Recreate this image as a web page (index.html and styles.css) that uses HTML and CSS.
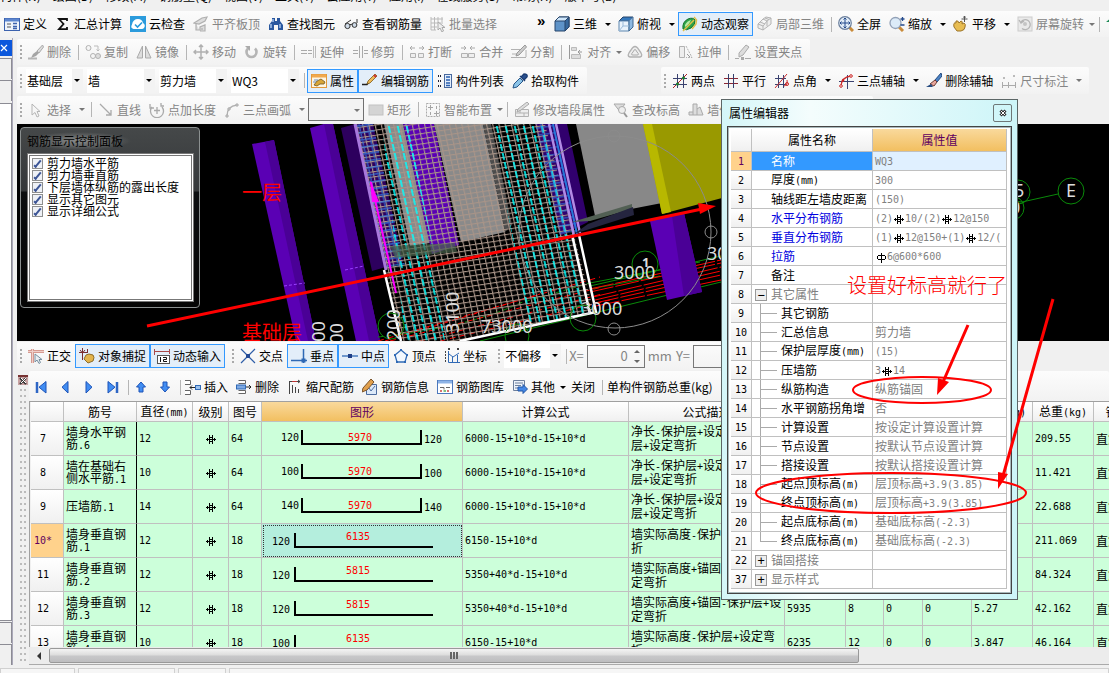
FILE: index.html
```html
<!DOCTYPE html>
<html lang="zh-CN">
<head>
<meta charset="utf-8">
<title>钢筋算量</title>
<link rel="stylesheet" href="styles.css">
</head>
<body>
<svg class="defs" aria-hidden="true">
  <symbol id="bar3" viewBox="0 0 12 12"><path d="M1 6.500H11M4.500 2V11M7.500 2V11" fill="none" stroke="currentColor"/><path d="M4 4.500H8M4 8.500H8M2.500 5V8M9.500 5V8" fill="none" stroke="currentColor"/></symbol>
  <symbol id="bar1" viewBox="0 0 12 12"><path d="M6.500 2V12M3 4.500H10M3 8.500H10M2.500 5V8M10.500 5V8" fill="none" stroke="currentColor"/></symbol>
  <symbol id="define" viewBox="0 0 16 16"><rect x=".5" y="2.500" width="15" height="12" fill="#eef3fb" stroke="#3c62ae"/><path d="M1 4H15" stroke="#5d86cf" stroke-width="3"/><path d="M3 8H7M3 11H7" stroke="#555"/><path d="M9 7.500H13M9 10.500H13M9 12.500H13" stroke="#3c62ae" stroke-width="1.500"/></symbol>
  <symbol id="sigma" viewBox="0 0 16 16"><path d="M12 5V3H4L8.500 8L4 13.200H12V11" fill="none" stroke="#111" stroke-width="1.800"/></symbol>
  <symbol id="cloud" viewBox="0 0 16 16"><rect width="16" height="16" fill="#2b9bdc"/><path d="M3.500 13Q0 12 2 8.500Q3 3 8 3Q12 3 13 7Q16 9 14 12Q13 13 12 13Z" fill="#fff"/><path d="M5 8.500L7.500 11L12 6.500" fill="none" stroke="#2b9bdc" stroke-width="1.600"/></symbol>
  <symbol id="flat" viewBox="0 0 16 16"><path d="M1 7L9 2L14 1L12 5L6 8ZM3 8V14H7V11L12 9V15H7M9 12V14" fill="#ddd" stroke="#b0b0b0" stroke-width="1.200"/></symbol>
  <symbol id="find" viewBox="0 0 16 16"><path d="M4 2H7V5H9V2H12V5L15 9V14H10V9H6V14H1V9L4 5Z" fill="#29579f"/><path d="M3 8V12M12 8V12M5 3V6" stroke="#b9d3f5" stroke-width="1.300"/></symbol>
  <symbol id="glasses" viewBox="0 0 16 16"><circle cx="4.500" cy="10" r="2.600" fill="#cfdbe8" stroke="#333"/><circle cx="11.500" cy="9" r="2.400" fill="#cfdbe8" stroke="#333"/><path d="M7 9Q8 7.500 9 8.500M2 8L8 4M14 7V3" fill="none" stroke="#333"/></symbol>
  <symbol id="batch" viewBox="0 0 16 16"><path d="M1 1V14M4.500 1V14M1 3H13M1 7H13M1 11H7M8 1V6M12 1V6M1 14H6" stroke="#bbb" fill="none"/><path d="M8 6V14L10 12L12 16L13.500 15L12 11.500H15Z" fill="#eee" stroke="#aaa"/></symbol>
  <symbol id="cube" viewBox="0 0 16 16"><path d="M1 5L5 1H15V11L11 15H1Z" fill="#5e93c8" stroke="#27456b"/><path d="M1 5L5 1H15L11 5Z" fill="#cfe6fa" stroke="#27456b"/><path d="M11 5V15L15 11V1Z" fill="#37689c" stroke="#27456b"/></symbol>
  <symbol id="topview" viewBox="0 0 16 16"><path d="M1 5L5 1H15L11 5Z" fill="#3579bd" stroke="#27456b"/><path d="M1 5H11V15H1Z" fill="#eaf3fb" stroke="#5d86af"/><path d="M11 5V15L15 11V1" fill="#8db8e0" stroke="#3d6690"/><path d="M5 6V10H11M5 10L1 15" stroke="#9bbbd9" fill="none"/></symbol>
  <symbol id="orbit" viewBox="0 0 16 16"><path d="M1 13Q0 6 6 3Q11 1 13 4Q14 8 9 12Q4 15 1 13Z" fill="#2da34a" stroke="#14732c"/><path d="M3 9Q5 5 9 4Q7 9 3 11Z" fill="#b8eaa5"/><path d="M12 1L14.500 4L14 8L10 13M1 15L12 4" fill="none" stroke="#dfc04a" stroke-width="1.500"/></symbol>
  <symbol id="part3d" viewBox="0 0 16 16"><path d="M1 8L6 3L10 5L6 10ZM6 10V14L1 12V8M6 14L14 8V2L9 1L6 3M10 5V10M14 2L10 5M3 6L8 8M8 2L12 3.500" fill="#eee" stroke="#b4b4b4"/></symbol>
  <symbol id="full" viewBox="0 0 16 16"><path d="M11 11L15 15" stroke="#c98b3a" stroke-width="3"/><circle cx="7" cy="7" r="6.300" fill="#e2edf8" stroke="#6b7f9c" stroke-width="1.200"/><path d="M7 2V12M2 7H12M5.500 3.500L7 2L8.500 3.500M5.500 10.500L7 12L8.500 10.500M3.500 5.500L2 7L3.500 8.500M10.500 5.500L12 7L10.500 8.500" stroke="#244a8c" fill="none"/></symbol>
  <symbol id="zoomi" viewBox="0 0 16 16"><path d="M10 11L14 15" stroke="#c98b3a" stroke-width="3"/><circle cx="6.500" cy="7" r="5.500" fill="#dcebf8" stroke="#92a1b7" stroke-width="1.300"/><path d="M13.500 1V5M11.500 3H15.500M11.500 9H15.500" stroke="#244a8c" stroke-width="1.300"/></symbol>
  <symbol id="hand" viewBox="0 0 16 16"><path d="M1 11Q0 6 3 7V5Q5 4 6 7L8 5Q10 5 9 8L11 7Q13 8 12 11Q12 14 8 15H4Z" fill="#e8bd52" stroke="#9c742a"/><path d="M11.500 0V6M8.500 3H14.500M10.500 1.500L11.500 0L12.500 1.500" stroke="#555" fill="none"/></symbol>
  <symbol id="screenrot" viewBox="0 0 16 16"><rect x="1" y="1" width="14" height="14" fill="#e9e9e9" stroke="#ccc"/><path d="M4 6A5 5 0 1 1 5 12.500M2 4L4 7L7 5" fill="none" stroke="#b5b5b5" stroke-width="1.300"/><circle cx="8" cy="8" r="2" fill="#c4c4c4"/></symbol>
  <symbol id="green" viewBox="0 0 16 16"><path d="M0 6L6 1L12 6H9V15H3V6Z" fill="#1d8a55"/></symbol>
  <symbol id="brush" viewBox="0 0 16 16"><path d="M14.500 1L9 7L11 9L15.500 3Z" fill="#ddd" stroke="#aaa"/><path d="M9 7L5 10L3 14L8 12L11 9Z" fill="#a5a5a5"/><path d="M0 14.500H9" stroke="#b5b5b5" stroke-width="2"/></symbol>
  <symbol id="copy" viewBox="0 0 16 16"><circle cx="3.500" cy="4" r="2.500" fill="#f5f5f5" stroke="#b2b2b2"/><circle cx="8" cy="12" r="2.500" fill="#f5f5f5" stroke="#b2b2b2"/><circle cx="13" cy="12" r="2.500" fill="#ddd" stroke="#b2b2b2"/><path d="M9 2H13V7M11.500 5.500L13 7L14.500 5.500" fill="none" stroke="#bbb"/></symbol>
  <symbol id="mirror" viewBox="0 0 16 16"><path d="M6.500 2V14H1ZM9.500 2V14H15Z" fill="#ddd" stroke="#aaa"/></symbol>
  <symbol id="move" viewBox="0 0 16 16"><path d="M8 1V15M1 8H15M6 3L8 1L10 3M6 13L8 15L10 13M3 6L1 8L3 10M13 6L15 8L13 10" stroke="#b0b0b0" stroke-width="1.500" fill="none"/></symbol>
  <symbol id="rotate" viewBox="0 0 16 16"><path d="M4 4.500A5 5 0 1 0 11 4.500" fill="none" stroke="#b5b5b5" stroke-width="2.600"/><path d="M1 2H6V7Z" fill="#aaa"/></symbol>
  <symbol id="extend" viewBox="0 0 16 16"><path d="M0 6.500H6M0 9.500H6M7 6.500H11M7 9.500H11" stroke="#aaa"/><path d="M12.500 2V14M14.500 2V14" stroke="#bbb"/></symbol>
  <symbol id="trim" viewBox="0 0 16 16"><path d="M1 6.500H6M1 9.500H6M12 6.500H16M12 9.500H16M7.500 2V14M10.500 2V14" stroke="#aaa"/></symbol>
  <symbol id="break" viewBox="0 0 16 16"><path d="M1 4H6M3 2L1 4L3 6M10 4H15M13 2L15 4L13 6" fill="none" stroke="#aaa"/><path d="M1.500 9.500H6.500V13.500H1.500ZM14.500 9.500H9.500V13.500H14.500Z" fill="#eee" stroke="#b2b2b2"/></symbol>
  <symbol id="merge" viewBox="0 0 16 16"><path d="M1 4H6M4 2L6 4L4 6M10 4H15M12 2L10 4L12 6" fill="none" stroke="#aaa"/><path d="M1.500 9.500H7.500V13.500H1.500ZM14.500 9.500H8.500V13.500H14.500Z" fill="#eee" stroke="#b2b2b2"/></symbol>
  <symbol id="split" viewBox="0 0 16 16"><path d="M0 5.500H9M0 13.500H15M15 6V13M1 10H9" stroke="#b2b2b2"/><path d="M14 1L6 9L5 12L8 11L15.500 3Z" fill="#ccc" stroke="#999"/></symbol>
  <symbol id="align" viewBox="0 0 16 16"><path d="M1.500 1V15" stroke="#999"/><path d="M3.500 3.500H8.500V6.500H3.500ZM3.500 10.500H12.500V14.500H3.500Z" fill="#ddd" stroke="#bbb"/><path d="M14 8H10M12 6L10 8L12 10" stroke="#999" fill="none"/></symbol>
  <symbol id="offset" viewBox="0 0 16 16"><path d="M4 6Q8-1 12 6Q17 12 13 13H3Q-1 12 4 6Z" fill="#eee" stroke="#b2b2b2" stroke-width="1.300"/><path d="M6 8Q8 3 10 8Q13 11 10 11H6Q3 11 6 8Z" fill="none" stroke="#aaa"/></symbol>
  <symbol id="stretch" viewBox="0 0 16 16"><path d="M1.500 2.500H6.500V13.500H1.500Z" fill="#eee" stroke="#b2b2b2"/><path d="M8 2L14 13.500H8" fill="none" stroke="#b2b2b2" stroke-dasharray="2 1"/><path d="M9 10L12 13" stroke="#999"/></symbol>
  <symbol id="gripset" viewBox="0 0 16 16"><path d="M4 9L11 1L14 3L8 11L4 13Z" fill="#ddd" stroke="#aaa"/><path d="M0 14.500H4M10 14.500H16" stroke="#aaa"/><rect x="6" y="13" width="3" height="3" fill="#aaa"/></symbol>
  <symbol id="prop" viewBox="0 0 16 16"><rect x=".5" y="1.500" width="15" height="13" fill="#fff6e2" stroke="#e39a3c"/><path d="M1 3H15" stroke="#f0a94e" stroke-width="3"/><path d="M3 12L6 8L10 6L14 9L13 11L9 11L6 13Z" fill="#d8a63a" stroke="#6f5522" stroke-width=".8"/><path d="M3 7H7M2 9H5" stroke="#668bc0"/></symbol>
  <symbol id="editbar" viewBox="0 0 16 16"><path d="M0 11.500H5L7 9" stroke="#222" stroke-width="1.500" fill="none"/><path d="M13 1L6 8L5 11L8 10L15 3Z" fill="#efb955" stroke="#7c5b1b" stroke-width=".8"/><path d="M12 2L14 4" stroke="#c33" stroke-width="2"/></symbol>
  <symbol id="list" viewBox="0 0 16 16"><path d="M1 3H5M1 8H5M1 13H5" stroke="#223" stroke-dasharray="1 1" stroke-width="2"/><rect x="7.500" y="1.500" width="7" height="13" fill="#e3eefb" stroke="#49699e"/><path d="M9 4H13M9 7H13M9 10H13M9 12.500H13" stroke="#2b5fb0" stroke-width="1.400"/></symbol>
  <symbol id="pick" viewBox="0 0 16 16"><path d="M1 15L2 11L8 5L11 8L5 14Z" fill="#8cc4e8" stroke="#28578a"/><path d="M8 3L13 8M9 4L12 1Q16 1 15 4L12 7Z" fill="#29508f" stroke="#1d3d73" stroke-width="1.300"/></symbol>
  <symbol id="twopt" viewBox="0 0 16 16"><path d="M1 5.500H15M1 11.500H15M5.500 1V15M11.500 1V15" stroke="#3a4270"/><path d="M1 15L15 1" stroke="#b02020"/><circle cx="5.500" cy="11" r="1.600" fill="#1e7b2d"/><circle cx="11.500" cy="5" r="1.600" fill="#1e7b2d"/></symbol>
  <symbol id="parallel" viewBox="0 0 16 16"><path d="M1 5.500H15M1 10.500H15" stroke="#8a2635"/><path d="M5.500 1V15M10.500 1V15" stroke="#33406e"/></symbol>
  <symbol id="angle" viewBox="0 0 16 16"><path d="M1 5.500H12M1 11.500H12M4.500 2V15M9.500 2V15" stroke="#3a4270"/><path d="M1 15L13 1M10 13Q14 12 13 7" stroke="#cc2b2b" fill="none"/><circle cx="13" cy="11" r="1.500" fill="none" stroke="#c22"/></symbol>
  <symbol id="arcax" viewBox="0 0 16 16"><path d="M1 8.500H16M9.500 2V16" stroke="#3a4270"/><path d="M3 14Q3 4 13 3" stroke="#cc2b2b" fill="none" stroke-width="1.300"/><circle cx="3" cy="13" r="1.300" fill="#fff" stroke="#c22"/><circle cx="13" cy="3" r="1.300" fill="#fff" stroke="#c22"/><circle cx="5" cy="7.500" r="1.300" fill="#c22"/></symbol>
  <symbol id="delax" viewBox="0 0 16 16"><path d="M15 0L9 7L11 9L16 3Z" fill="#4a83c5" stroke="#254b80"/><path d="M9 7L11 9L8 13L4 11Z" fill="#e9a79c" stroke="#6d3b36"/><path d="M0 14H7L5 11Z" fill="#254b80"/></symbol>
  <symbol id="dim" viewBox="0 0 16 16"><path d="M1.500 9V15M14.500 9V15M7.500 9V15M2 12.500H14" stroke="#aaa"/><path d="M2 5H4M12 3H14" stroke="#bbb" stroke-width="2"/></symbol>
  <symbol id="arrow" viewBox="0 0 16 16"><path d="M4 2V13L7 10.500L9 15L11 14L9 9.500H12Z" fill="#f6f6f6" stroke="#b5b5b5"/></symbol>
  <symbol id="line" viewBox="0 0 16 16"><path d="M2 2L13 13M13 8V13H8" fill="none" stroke="#aaa" stroke-width="1.300"/></symbol>
  <symbol id="ptlen" viewBox="0 0 16 16"><path d="M3 5A6.500 6.500 0 1 0 13 5M1 2V6H5" fill="none" stroke="#aaa" stroke-width="1.300"/><path d="M8 5V12M5 8.500H11M12 1V4H15" stroke="#aaa" stroke-width="1.300" fill="none"/></symbol>
  <symbol id="arc" viewBox="0 0 16 16"><path d="M3 14Q3 4 13 3" fill="none" stroke="#b0b0b0" stroke-width="1.300"/><path d="M2 13H4V15H2ZM4 6H6V8H4ZM12 2H14V4H12Z" fill="#ddd" stroke="#aaa"/></symbol>
  <symbol id="rect" viewBox="0 0 16 16"><rect x="1" y="3" width="14" height="10" fill="#d4d4d4" stroke="#c2c2c2"/></symbol>
  <symbol id="smart" viewBox="0 0 16 16"><rect x="1.500" y="1.500" width="13" height="13" fill="none" stroke="#aaa" stroke-dasharray="2 1"/><path d="M5.500 3V8M3 5.500H8M11.500 9V14M9 11.500H14M11.500 4V7M5.500 10V13" stroke="#a5a5a5"/></symbol>
  <symbol id="modwall" viewBox="0 0 16 16"><path d="M1.500 7.500H14.500V14.500H1.500ZM1.500 11H14.500M6 7.500V11M10 11V14.500" fill="#eee" stroke="#b2b2b2"/><path d="M13 0L4 7L3 10L7 8L15 2Z" fill="#ddd" stroke="#aaa"/></symbol>
  <symbol id="elev" viewBox="0 0 16 16"><path d="M1 2H12L6.500 9Z" fill="#ddd" stroke="#aaa"/><circle cx="9" cy="8" r="3.500" fill="#eee" stroke="#aaa"/><path d="M11 11L14 15" stroke="#999" stroke-width="2"/></symbol>
  <symbol id="wallic" viewBox="0 0 16 16"><path d="M1 13V10H5V2H9V7L12 5L15 13Z" fill="#ddd" stroke="#aaa"/><path d="M5 10V13M9 7V13" stroke="#aaa"/></symbol>
  <symbol id="ortho" viewBox="0 0 16 16"><path d="M0 3.500H16M4.500 1V15" stroke="#d59a90" stroke-width="3"/><path d="M0 3.500H16M4.500 1V15" stroke="#f0cfc9"/><path d="M7 6V14L9 12L11 15.500L12.500 14.500L11 11.500H14Z" fill="#e9eef2" stroke="#7890a0"/></symbol>
  <symbol id="snap" viewBox="0 0 16 16"><path d="M0 4.500H9M3.500 0V12M8.500 1V5M1 2L3.500 5L6 2" stroke="#7b3030" fill="none"/><path d="M5 11L7 7L10 6L14 7Q16 9 14 13L9 15Z" fill="#e3b44c" stroke="#8e6d29"/></symbol>
  <symbol id="dyn" viewBox="0 0 16 16"><path d="M0 3.500H16M.5 1V7M15.500 1V6" stroke="#aa4a4a"/><rect x="3.500" y="7.500" width="12" height="8" fill="#fff" stroke="#555"/><path d="M6.500 9V14M9 9.500H12.500V11.500H9.500V13.500H13" stroke="#111" fill="none"/></symbol>
  <symbol id="cross" viewBox="0 0 16 16"><path d="M1 1L15 15M15 1L1 15" stroke="#2f5ea8" stroke-width="1.200"/><path d="M6 6H10V10H6Z" fill="#244a94"/></symbol>
  <symbol id="perp" viewBox="0 0 16 16"><path d="M0 12.500H16M12.500 1V15" stroke="#2f69b5" stroke-width="1.500"/><rect x="10.500" y="10.500" width="4" height="4" fill="#2f69b5"/></symbol>
  <symbol id="mid" viewBox="0 0 16 16"><path d="M0 8H16" stroke="#2f69b5" stroke-width="1.300"/><rect x="6" y="6" width="4" height="4" fill="#1e3f87"/></symbol>
  <symbol id="penta" viewBox="0 0 16 16"><path d="M8 2L14 7L12 14H4L2 7Z" fill="#f3f8fe" stroke="#2f69b5" stroke-width="1.300"/><path d="M7 1H9V3H7ZM13 6H15V8H13ZM1 6H3V8H1ZM3 13H5V15H3ZM11 13H13V15H11Z" fill="#2f69b5"/></symbol>
  <symbol id="coord" viewBox="0 0 16 16"><path d="M4.500 3V14.500H16M5 6L9 9L15 5M8.500 9V14M13.500 7V14" stroke="#2f69b5" fill="none"/><path d="M1.500 3V14" stroke="#444" stroke-dasharray="2 1"/><path d="M4 0L6 2M6 0L4 2M13 0L15 2M15 0L13 2" stroke="#444"/></symbol>
  <symbol id="first" viewBox="0 0 16 16"><path d="M4 3V14" stroke="#2e66c5" stroke-width="2.500"/><path d="M13 2.500V14L6 8.200Z" fill="#418df2" stroke="#1c53b7"/></symbol>
  <symbol id="prev" viewBox="0 0 16 16"><path d="M11 2.500V14L5 8.200Z" fill="#418df2" stroke="#1c53b7"/></symbol>
  <symbol id="next" viewBox="0 0 16 16"><path d="M5 2.500V14L11 8.200Z" fill="#418df2" stroke="#1c53b7"/></symbol>
  <symbol id="last" viewBox="0 0 16 16"><path d="M12 3V14" stroke="#2e66c5" stroke-width="2.500"/><path d="M3 2.500V14L10 8.200Z" fill="#418df2" stroke="#1c53b7"/></symbol>
  <symbol id="up" viewBox="0 0 16 16"><path d="M8 3L12.500 8H10V13H6V8H3.500Z" fill="#418df2" stroke="#1c53b7"/></symbol>
  <symbol id="down" viewBox="0 0 16 16"><path d="M8 13L12.500 8H10V3H6V8H3.500Z" fill="#418df2" stroke="#1c53b7"/></symbol>
  <symbol id="insert" viewBox="0 0 16 16"><path d="M0 1.500H5.500V5.500H0M0 11.500H5.500V15.500H0" fill="#fff" stroke="#666"/><path d="M5 8.500H10M7 6.500L5 8.500L7 10.500" stroke="#222" fill="none"/><rect x="10.500" y="6.500" width="5" height="4" fill="#9cc3ef" stroke="#2f69b5"/></symbol>
  <symbol id="delrow" viewBox="0 0 16 16"><path d="M2.500 1.500H9.500V4.500H2.500M2.500 11.500H9.500V14.500H2.500" fill="#fff" stroke="#666"/><rect x=".5" y="6" width="9" height="4" fill="#7da9e4" stroke="#2f69b5"/><path d="M10 8H15M13 6L15 8L13 10" fill="none" stroke="#222"/></symbol>
  <symbol id="scale" viewBox="0 0 16 16"><path d="M2.500 2V15M2 2.500H13M11 1L13 2.500L11 4M5.500 6V14M8.500 8V14M11.500 10V14" stroke="#444" fill="none"/><path d="M5 2.500H10" stroke="#b33"/></symbol>
  <symbol id="info" viewBox="0 0 16 16"><path d="M4.500 5.500H14.500V15.500H4.500Z" fill="#dce9f9" stroke="#4c6ca0"/><path d="M7 9L9 12L13 7" stroke="#4c6ca0" fill="none"/><path d="M9 0L1 9L0 13L5 11L12 3Z" fill="#e1a04d" stroke="#7a532a"/></symbol>
  <symbol id="lib" viewBox="0 0 16 16"><rect x=".5" y="1.500" width="15" height="13" fill="#fff" stroke="#4b78bd"/><path d="M1 3H15" stroke="#8db3e6" stroke-width="3"/><path d="M3 8.500H7V10.500" stroke="#666" fill="none"/><path d="M9 8.500H13" stroke="#666"/><path d="M3 12H5M10 12H12" stroke="#c44" stroke-width="1.500"/><path d="M6.500 12H9" stroke="#5a5" stroke-width="1.500"/></symbol>
  <symbol id="other" viewBox="0 0 16 16"><path d="M1.500 1.500H12.500V11.500H1.500ZM3 4H11M3 6.500H9M3 9H7" fill="#edf3fb" stroke="#6c7f9c"/><path d="M6 8H11V5.500L15.500 10L11 14.500V12H6Z" fill="#4386e4" stroke="#2256a5"/></symbol>
</svg>

<nav class="menu"><a href="#">构件(N)</a><a href="#">绘图(D)</a><a href="#">修改(M)</a><a href="#">钢筋量(Q)</a><a href="#">视图(V)</a><a href="#">工具(T)</a><a href="#">云应用(Y)</a><a href="#">应用(I)</a><a href="#">在线服务(S)</a><a href="#">帮助(H)</a><a href="#">版本号(B)</a></nav>

<div class="bars top">
  <div class="bar main-bar">
    <button><svg><use href="#define"/></svg>定义</button>
    <button><svg><use href="#sigma"/></svg>汇总计算</button>
    <button><svg><use href="#cloud"/></svg>云检查</button>
    <button disabled><svg><use href="#flat"/></svg>平齐板顶</button>
    <button><svg><use href="#find"/></svg>查找图元</button>
    <button><svg><use href="#glasses"/></svg>查看钢筋量</button>
    <button disabled><svg><use href="#batch"/></svg>批量选择</button>
    <button class="more" aria-label="更多">»</button>
  </div>
  <div class="bar view-bar">
    <button><svg><use href="#cube"/></svg>三维</button><button class="drop" aria-label="三维选项"></button>
    <button><svg><use href="#topview"/></svg>俯视</button><button class="drop" aria-label="俯视选项"></button>
    <button class="on" aria-pressed="true"><svg><use href="#orbit"/></svg>动态观察</button>
    <button disabled><svg><use href="#part3d"/></svg>局部三维</button><span class="sep"></span>
    <button><svg><use href="#full"/></svg>全屏</button>
    <button><svg><use href="#zoomi"/></svg>缩放</button><button class="drop" aria-label="缩放选项"></button>
    <button><svg><use href="#hand"/></svg>平移</button><button class="drop" aria-label="平移选项"></button>
    <button disabled><svg><use href="#screenrot"/></svg>屏幕旋转</button><button class="drop tight" disabled aria-label="旋转选项"></button><span class="sep"></span>
    <button aria-label="楼层"><svg><use href="#green"/></svg></button>
  </div>
</div>

<div class="workspace">
  <aside class="side">
    <button class="side-close" aria-label="关闭"><svg viewBox="0 0 12 16"><path d="M1 5L7 11M7 5L1 11" stroke="#fff" stroke-width="1.200"/></svg></button>
    <div class="slot"></div><div class="slot"></div><div class="slot tree"></div><div class="slot"></div><div class="slot"></div>
  </aside>

  <main class="main">
    <div class="bars edit-row">
      <div class="bar"><span class="grip"></span>
        <button disabled><svg><use href="#brush"/></svg>删除</button><span class="sep"></span>
        <button disabled><svg><use href="#copy"/></svg>复制</button>
        <button disabled><svg><use href="#mirror"/></svg>镜像</button><span class="sep"></span>
        <button disabled><svg><use href="#move"/></svg>移动</button>
        <button disabled><svg><use href="#rotate"/></svg>旋转</button><span class="sep"></span>
        <button disabled><svg><use href="#extend"/></svg>延伸</button>
        <button disabled><svg><use href="#trim"/></svg>修剪</button><span class="sep"></span>
        <button disabled><svg><use href="#break"/></svg>打断</button>
        <button disabled><svg><use href="#merge"/></svg>合并</button>
        <button disabled><svg><use href="#split"/></svg>分割</button><span class="sep"></span>
        <button disabled><svg><use href="#align"/></svg>对齐</button><button class="drop tight" disabled aria-label="对齐选项"></button>
        <button disabled><svg><use href="#offset"/></svg>偏移</button>
        <button disabled><svg><use href="#stretch"/></svg>拉伸</button><span class="sep"></span>
        <button disabled><svg><use href="#gripset"/></svg>设置夹点</button>
      </div>
    </div>
    <div class="bars">
      <div class="bar"><span class="grip"></span>
        <span class="combo short"><select aria-label="楼层"><option>基础层</option></select></span>
        <span class="combo"><select aria-label="构件类型"><option>墙</option></select></span>
        <span class="combo"><select aria-label="构件"><option>剪力墙</option></select></span>
        <span class="combo"><select aria-label="名称"><option>WQ3</option></select></span><span class="sep"></span>
        <button class="on" aria-pressed="true"><svg><use href="#prop"/></svg>属性</button>
        <button class="on" aria-pressed="true"><svg><use href="#editbar"/></svg>编辑钢筋</button>
        <button><svg><use href="#list"/></svg>构件列表</button>
        <button><svg><use href="#pick"/></svg>拾取构件</button>
      </div>
      <div class="bar axis-bar"><span class="grip"></span>
        <button><svg><use href="#twopt"/></svg>两点</button>
        <button><svg><use href="#parallel"/></svg>平行</button>
        <button><svg><use href="#angle"/></svg>点角</button><button class="drop" aria-label="点角选项"></button>
        <button><svg><use href="#arcax"/></svg>三点辅轴</button><button class="drop" aria-label="辅轴选项"></button>
        <button><svg><use href="#delax"/></svg>删除辅轴</button>
        <button disabled><svg><use href="#dim"/></svg>尺寸标注</button><button class="drop" disabled aria-label="标注选项"></button>
      </div>
    </div>
    <div class="bars">
      <div class="bar draw-bar"><span class="grip"></span>
        <button disabled><svg><use href="#arrow"/></svg>选择</button><button class="drop" disabled aria-label="选择选项"></button><span class="sep"></span>
        <button disabled><svg><use href="#line"/></svg>直线</button>
        <button disabled><svg><use href="#ptlen"/></svg>点加长度</button>
        <button disabled><svg><use href="#arc"/></svg>三点画弧</button><button class="drop" disabled aria-label="画弧选项"></button>
        <span class="combo boxed"><select aria-label="半径" disabled><option></option></select></span>
        <button disabled><svg><use href="#rect"/></svg>矩形</button><span class="sep"></span>
        <button disabled><svg><use href="#smart"/></svg>智能布置</button><button class="drop tight" disabled aria-label="布置选项"></button><span class="sep"></span>
        <button disabled><svg><use href="#modwall"/></svg>修改墙段属性</button>
        <button disabled><svg><use href="#elev"/></svg>查改标高</button>
        <button disabled><svg><use href="#wallic"/></svg>墙体拉伸</button>
      </div>
    </div>

    <section class="view">
      <svg class="scene" viewBox="17 124 1092 217" preserveAspectRatio="xMinYMin slice" role="img" aria-label="三维视图">
        <defs>
          <pattern id="mesh" width="6" height="5" patternUnits="userSpaceOnUse" patternTransform="matrix(1 -.15 .22 1 0 0)"><path d="M0 .5H6M.5 0V5" stroke="#a89488" stroke-width="1.200"/></pattern>
          <pattern id="cy" width="9" height="9" patternUnits="userSpaceOnUse" patternTransform="matrix(1 0 .22 1 0 0)"><path d="M1 0V7" stroke="#00ffff" stroke-width="1.600"/></pattern>
          <pattern id="bl" width="8" height="7" patternUnits="userSpaceOnUse" patternTransform="matrix(1 -.15 .22 1 0 0)"><path d="M1 0V5M0 6H8" stroke="#3479df"/></pattern>
        </defs>
        <path d="M252 144L274 140L316 341H296Z" fill="#5a00b4"/><path d="M265 142L274 140L316 341H308Z" fill="#4a0096"/>
        <path d="M310 128L324 124H333L380 341H356Z" fill="#5a00b4"/><path d="M324 124H333L380 341H369Z" fill="#4a0096"/>
        <path d="M284 286L305 283M345 270L364 266" stroke="#9a40ff" stroke-dasharray="3 2"/>
        <path d="M341 128L355 124H373L403 262L372 271Z" fill="#2d005e"/>
        <path d="M384 124H403L430 243L410 246Z" fill="#8a8a8a"/>
        <path d="M403 124H434L459 245L432 254Z" fill="#5a00b4"/>
        <path d="M434 124H483L505 232L461 242Z" fill="#8a8a8a"/><path d="M483 124L491 124L512 225L505 232Z" fill="#4c4c4c"/>
        <path d="M535 124H567L588 222L560 236Z" fill="#31006d"/>
        <g fill="none" stroke-width="1">
          <path d="M378 337Q470 327 520 303L590 283" stroke="#0a8a0a" stroke-dasharray="5 3"/>
          <path d="M378 341L600 277M390 341L602 287M420 341L602 294M440 341L610 300M385 341L540 294" stroke="#f00" stroke-dasharray="6 4"/>
          <path d="M590 286L721 256M590 283L700 262M480 341L721 282M590 289L660 276" stroke="#0a8a0a"/>
          <path d="M590 289L721 260M590 292L721 263M593 297L721 267M595 300L721 271M595 303L721 275M596 306L721 280" stroke="#f00" stroke-dasharray="24 2"/>
        </g>
        <path d="M355 124H545L594 312L460 341H400Z" fill="url(#mesh)"/>
        <path d="M355 124H373L405 265L385 270Z" fill="url(#bl)"/>
        <path d="M382 124H408L432 243L445 341H405Z" fill="url(#cy)"/>
        <path d="M491 124H550L590 313L530 326L510 225Z" fill="url(#cy)"/>
        <path d="M535 124H552L578 232L560 236Z" fill="url(#bl)" opacity=".8"/>
        <path d="M355 124L386 270" stroke="#a878dc" stroke-width="3"/><path d="M549 124L574 235M556 124L580 233" stroke="#b28ae4" stroke-width="2.500"/>
        <path d="M553 124L577 234" stroke="#2677d9" stroke-width="2"/>
        <path d="M384 270L401 341M572 235L590 314M579 235L596 312L460 341" stroke="#fff" stroke-width="2.500" fill="none"/>
        <path d="M371 182L396 293" stroke="#f0f" stroke-width="2"/><path d="M370 180L379 202L372 202Z" fill="#f0f"/>
        <path d="M576 124H644L662 203L595 216Z" fill="#888"/>
        <path d="M643 124H722V198L662 214Z" fill="#999900"/><path d="M643 124H652L671 212L662 214Z" fill="#b8b800"/>
        <path d="M650 221L684 213L702 292L667 300Z" fill="#5a00b4"/><path d="M672 216L684 213L702 292L684 296Z" fill="#4a0096"/>
        <path d="M572 222L632 204V209L590 221Z" fill="#526054"/><path d="M588 224L633 207L634 215L574 234Z" fill="#25253f"/>
        <path d="M390 246L455 243L457 252L395 258Z" fill="#48624c" opacity=".7"/>
        <g fill="none" stroke="#8c8c8c"><circle cx="615" cy="232" r="96"/><circle cx="614" cy="136" r="6"/><circle cx="711" cy="232" r="6"/><circle cx="614" cy="329" r="6"/></g>
        <g fill="none" stroke="#0a8a0a"><circle cx="645" cy="264" r="13"/><circle cx="583" cy="318" r="13"/><circle cx="517" cy="336" r="12"/><circle cx="391" cy="326" r="13"/><circle cx="1071" cy="191" r="13"/><circle cx="1018" cy="192" r="12"/><circle cx="1012" cy="208" r="12"/><path d="M1022 202L1058 194M1010 201L1022 202"/></g>
        <g class="dims"><text x="614" y="279">3000</text><text x="642" y="267" class="small">1</text><text x="581" y="315">3000</text><text x="481" y="333">73000</text><text x="707" y="260">3000</text><text x="1066" y="197">E</text><text x="1014" y="197">5</text><text x="1010" y="214">0</text>
        <text transform="translate(325 352) rotate(-90)">000</text><text transform="translate(343 354) rotate(-90)">000</text><text transform="translate(400 340) rotate(-90)">200</text><text transform="translate(459 333) rotate(-90)">3100</text></g>
        <g class="floor"><text x="242" y="200">一层</text><text x="242" y="340">基础层</text></g>
      </svg>
      <section class="panel">
        <h2>钢筋显示控制面板</h2>
        <div class="checks">
          <label><input type="checkbox" checked>剪力墙水平筋</label>
          <label><input type="checkbox" checked>剪力墙垂直筋</label>
          <label><input type="checkbox" checked>下层墙体纵筋的露出长度</label>
          <label><input type="checkbox" checked>显示其它图元</label>
          <label><input type="checkbox" checked>显示详细公式</label>
        </div>
      </section>
    </section>

    <div class="bars snap-row">
      <div class="bar"><span class="grip"></span>
        <button><svg><use href="#ortho"/></svg>正交</button>
        <button class="on" aria-pressed="true"><svg><use href="#snap"/></svg>对象捕捉</button>
        <button class="on" aria-pressed="true"><svg><use href="#dyn"/></svg>动态输入</button>
      </div>
      <div class="bar"><span class="grip"></span>
        <button><svg><use href="#cross"/></svg>交点</button>
        <button class="on" aria-pressed="true"><svg><use href="#perp"/></svg>垂点</button>
        <button class="on" aria-pressed="true"><svg><use href="#mid"/></svg>中点</button>
        <button><svg><use href="#penta"/></svg>顶点</button>
        <button><svg><use href="#coord"/></svg>坐标</button>
      </div>
      <div class="bar"><span class="grip"></span>
        <span class="combo short"><select aria-label="偏移"><option>不偏移</option></select></span><span class="sep"></span>
        <label class="xy">X=<span class="spin"><input type="text" value="0" disabled></span>mm</label>
        <label class="xy">Y=<span class="spin"><input type="text" value="0" disabled></span>mm</label>
      </div>
    </div>

    <section class="dock">
      <div class="dock-grip"><button aria-label="关闭钢筋表"><svg viewBox="0 0 10 10"><rect width="10" height="10" fill="#c9a3a3"/><path d="M0 1H10" stroke="#733" stroke-width="2"/><path d="M2 3L8 9M8 3L2 9" stroke="#333" stroke-width="2"/><path d="M3 3L8 8M8 3L3 8" stroke="#fff"/></svg></button></div>
      <div class="dock-body">
        <div class="bar dock-bar">
          <button aria-label="首条"><svg><use href="#first"/></svg></button><button aria-label="上一条"><svg><use href="#prev"/></svg></button><button aria-label="下一条"><svg><use href="#next"/></svg></button><button aria-label="末条"><svg><use href="#last"/></svg></button><span class="sep"></span>
          <button aria-label="上移"><svg><use href="#up"/></svg></button><button aria-label="下移"><svg><use href="#down"/></svg></button><span class="sep"></span>
          <button><svg><use href="#insert"/></svg>插入</button>
          <button><svg><use href="#delrow"/></svg>删除</button>
          <button><svg><use href="#scale"/></svg>缩尺配筋</button>
          <button><svg><use href="#info"/></svg>钢筋信息</button>
          <button><svg><use href="#lib"/></svg>钢筋图库</button>
          <button><svg><use href="#other"/></svg>其他</button><button class="drop tight" aria-label="其他选项"></button>
          <button>关闭</button><span class="sep"></span>
          <span class="total">单构件钢筋总重(kg)</span>
        </div>
        <div class="grid-wrap">
          <table class="grid">
            <colgroup><col class="w33"><col class="w73"><col class="w56"><col class="w36"><col class="w33"><col class="w201"><col class="w166"><col class="w156"><col class="w61"><col class="w38"><col class="w39"><col class="w49"><col class="w61"><col class="w61"><col class="w72"></colgroup>
            <thead><tr><th></th><th>筋号</th><th>直径<span class="m">(mm)</span></th><th>级别</th><th>图号</th><th class="cur">图形</th><th>计算公式</th><th>公式描述</th><th>长度<span class="m">(mm)</span></th><th>根数</th><th>搭接</th><th>损耗<span class="m">(%)</span></th><th>单重<span class="m">(kg)</span></th><th>总重<span class="m">(kg)</span></th><th>钢筋归类</th></tr></thead>
            <tbody>
            <tr><th>7</th><td>墙身水平钢筋<span class="m">.6</span></td><td class="n">12</td><td class="c"><svg><use href="#bar3"/></svg></td><td class="n">64</td><td class="shape"><svg viewBox="0 0 200 33"><path d="M40 8V22H159V8"/><text x="19" y="19">120</text><text x="162" y="21">120</text><text x="86" y="19" class="red">5970</text></svg></td><td class="n">6000-15+10*d-15+10*d</td><td>净长<span class="m">-</span>保护层<span class="m">+</span>设定弯折<span class="m">-</span>保护层<span class="m">+</span>设定弯折</td><td class="n">6210</td><td class="n">38</td><td class="n">0</td><td class="n">0</td><td class="n">5.514</td><td class="n">209.55</td><td>直筋</td></tr>
            <tr><th>8</th><td>墙在基础右侧水平筋<span class="m">.1</span></td><td class="n">10</td><td class="c"><svg><use href="#bar3"/></svg></td><td class="n">64</td><td class="shape"><svg viewBox="0 0 200 33"><path d="M40 8V22H159V8"/><text x="19" y="19">100</text><text x="162" y="21">100</text><text x="86" y="19" class="red">5970</text></svg></td><td class="n">6000-15+10*d-15+10*d</td><td>净长<span class="m">-</span>保护层<span class="m">+</span>设定弯折<span class="m">-</span>保护层<span class="m">+</span>设定弯折</td><td class="n">6170</td><td class="n">3</td><td class="n">0</td><td class="n">0</td><td class="n">3.807</td><td class="n">11.421</td><td>直筋</td></tr>
            <tr><th>9</th><td>压墙筋<span class="m">.1</span></td><td class="n">14</td><td class="c"><svg><use href="#bar3"/></svg></td><td class="n">64</td><td class="shape"><svg viewBox="0 0 200 33"><path d="M40 8V22H159V8"/><text x="19" y="19">140</text><text x="162" y="21">140</text><text x="86" y="19" class="red">5970</text></svg></td><td class="n">6000-15+10*d-15+10*d</td><td>净长<span class="m">-</span>保护层<span class="m">+</span>设定弯折<span class="m">-</span>保护层<span class="m">+</span>设定弯折</td><td class="n">6250</td><td class="n">3</td><td class="n">0</td><td class="n">0</td><td class="n">7.563</td><td class="n">22.688</td><td>直筋</td></tr>
            <tr><th class="cur">10*</th><td>墙身垂直钢筋<span class="m">.1</span></td><td class="n">12</td><td class="c"><svg><use href="#bar3"/></svg></td><td class="n">18</td><td class="shape sel"><svg viewBox="0 0 200 33"><path d="M33 9V23H171"/><text x="10" y="21">120</text><text x="84" y="16" class="red">6135</text></svg></td><td class="n">6150-15+10*d</td><td>墙实际高度<span class="m">-</span>保护层<span class="m">+</span>设定弯折</td><td class="n">6255</td><td class="n">38</td><td class="n">0</td><td class="n">0</td><td class="n">5.554</td><td class="n">211.069</td><td>直筋</td></tr>
            <tr><th>11</th><td>墙身垂直钢筋<span class="m">.2</span></td><td class="n">12</td><td class="c"><svg><use href="#bar3"/></svg></td><td class="n">18</td><td class="shape"><svg viewBox="0 0 200 33"><path d="M33 9V23H171"/><text x="10" y="21">120</text><text x="84" y="16" class="red">5815</text></svg></td><td class="n">5350+40*d-15+10*d</td><td>墙实际高度<span class="m">+</span>锚固<span class="m">-</span>保护层<span class="m">+</span>设定弯折</td><td class="n">5935</td><td class="n">16</td><td class="n">0</td><td class="n">0</td><td class="n">5.27</td><td class="n">84.324</td><td>直筋</td></tr>
            <tr><th>12</th><td>墙身垂直钢筋<span class="m">.3</span></td><td class="n">12</td><td class="c"><svg><use href="#bar3"/></svg></td><td class="n">18</td><td class="shape"><svg viewBox="0 0 200 33"><path d="M33 9V23H171"/><text x="10" y="21">120</text><text x="84" y="16" class="red">5815</text></svg></td><td class="n">5350+40*d-15+10*d</td><td>墙实际高度<span class="m">+</span>锚固<span class="m">-</span>保护层<span class="m">+</span>设定弯折</td><td class="n">5935</td><td class="n">8</td><td class="n">0</td><td class="n">0</td><td class="n">5.27</td><td class="n">42.162</td><td>直筋</td></tr>
            <tr><th>13</th><td>墙身垂直钢筋<span class="m">.4</span></td><td class="n">10</td><td class="c"><svg><use href="#bar3"/></svg></td><td class="n">18</td><td class="shape"><svg viewBox="0 0 200 33"><path d="M33 9V23H171"/><text x="10" y="21">100</text><text x="84" y="16" class="red">6135</text></svg></td><td class="n">6150-15+10*d</td><td>墙实际高度<span class="m">-</span>保护层<span class="m">+</span>设定弯折</td><td class="n">6235</td><td class="n">12</td><td class="n">0</td><td class="n">0</td><td class="n">3.847</td><td class="n">46.164</td><td>直筋</td></tr>
            </tbody>
          </table>
        </div>
        <div class="hscroll"><button aria-label="向左滚动"></button><div class="thumb"><i></i><i></i><i></i></div></div>
      </div>
    </section>
  </main>
</div>
<footer class="status"><span></span><span></span><span></span><span></span></footer>

<section class="props">
  <header><h2>属性编辑器</h2><button aria-label="关闭属性编辑器"><svg viewBox="0 0 8 8"><path d="M1.500 1.500L6.500 6.500M6.500 1.500L1.500 6.500" stroke="#333" stroke-width="3"/><path d="M2 2L6 6M6 2L2 6" stroke="#fff"/></svg></button></header>
  <div class="props-body">
    <table>
      <colgroup><col class="w21"><col class="w121"><col></colgroup>
      <thead><tr><th></th><th>属性名称</th><th class="cur">属性值</th></tr></thead>
      <tbody>
      <tr class="active"><th class="cur">1</th><td>名称</td><td><span class="m">WQ3</span></td></tr>
      <tr><th>2</th><td>厚度<span class="m">(mm)</span></td><td><span class="m">300</span></td></tr>
      <tr><th>3</th><td>轴线距左墙皮距离</td><td><span class="m">(150)</span></td></tr>
      <tr class="blue"><th>4</th><td>水平分布钢筋</td><td><span class="m">(2)<svg><use href="#bar3"/></svg>10/(2)<svg><use href="#bar3"/></svg>12@150</span></td></tr>
      <tr class="blue"><th>5</th><td>垂直分布钢筋</td><td><span class="m">(1)<svg><use href="#bar3"/></svg>12@150+(1)<svg><use href="#bar3"/></svg>12/(</span></td></tr>
      <tr class="blue"><th>6</th><td>拉筋</td><td><span class="m"><svg><use href="#bar1"/></svg>6@600*600</span></td></tr>
      <tr><th>7</th><td>备注</td><td></td></tr>
      <tr class="group"><th>8</th><td><button aria-label="收起">−</button>其它属性</td><td></td></tr>
      <tr class="child"><th>9</th><td>其它钢筋</td><td></td></tr>
      <tr class="child"><th>10</th><td>汇总信息</td><td>剪力墙</td></tr>
      <tr class="child"><th>11</th><td>保护层厚度<span class="m">(mm)</span></td><td><span class="m">(15)</span></td></tr>
      <tr class="child"><th>12</th><td>压墙筋</td><td><span class="m">3<svg><use href="#bar3"/></svg>14</span></td></tr>
      <tr class="child"><th>13</th><td>纵筋构造</td><td>纵筋锚固</td></tr>
      <tr class="child"><th>14</th><td>水平钢筋拐角增</td><td>否</td></tr>
      <tr class="child"><th>15</th><td>计算设置</td><td>按设定计算设置计算</td></tr>
      <tr class="child"><th>16</th><td>节点设置</td><td>按默认节点设置计算</td></tr>
      <tr class="child"><th>17</th><td>搭接设置</td><td>按默认搭接设置计算</td></tr>
      <tr class="child"><th>18</th><td>起点顶标高<span class="m">(m)</span></td><td>层顶标高<span class="m">+3.9(3.85)</span></td></tr>
      <tr class="child"><th>19</th><td>终点顶标高<span class="m">(m)</span></td><td>层顶标高<span class="m">+3.9(3.85)</span></td></tr>
      <tr class="child"><th>20</th><td>起点底标高<span class="m">(m)</span></td><td>基础底标高<span class="m">(-2.3)</span></td></tr>
      <tr class="child end"><th>21</th><td>终点底标高<span class="m">(m)</span></td><td>基础底标高<span class="m">(-2.3)</span></td></tr>
      <tr class="group"><th>22</th><td><button aria-label="展开">+</button>锚固搭接</td><td></td></tr>
      <tr class="group"><th>37</th><td><button aria-label="展开">+</button>显示样式</td><td></td></tr>
      </tbody>
    </table>
  </div>
</section>

<svg class="notes" viewBox="0 0 1109 673" preserveAspectRatio="xMinYMin slice">
  <g fill="none" stroke="#f00" stroke-width="3"><path d="M147 326L702 209M968 325L943 382M1053 299L1003 476"/>
  <ellipse cx="922" cy="390" rx="69" ry="13" stroke-width="2"/><ellipse cx="891" cy="493" rx="135" ry="20" stroke-width="2"/></g>
  <path d="M698 203L716 206L700 214ZM938 378L949 382L937 395ZM998 472L1008 474L998 489Z" fill="#f00"/>
  <text x="847" y="293">设置好标高就行了</text>
</svg>
</body>
</html>
```
FILE: styles.css
```css
* { box-sizing: border-box; }
body { margin: 0; height: 100vh; overflow: hidden; display: flex; flex-direction: column; background: #f0f0f0; font: 12px/16px "Noto Sans CJK SC", sans-serif; color: #000; }
button, input, select { font: inherit; color: inherit; margin: 0; padding: 0; border: 0; background: none; }
h2 { margin: 0; font: inherit; }
.defs { position: absolute; width: 0; height: 0; }
.m, .n { font-family: "DejaVu Sans Mono", monospace; font-size: 10px; }

.menu { flex: none; height: 10px; overflow: hidden; display: flex; gap: 12px; }
.menu a { color: #000; text-decoration: none; line-height: 16px; height: 16px; margin-top: -12px; }

.bars { flex: none; display: flex; height: 29px; padding: 1px 0; }
.bars.top, .edit-row { height: 28px; }
.snap-row { height: 30px; }
.bar { display: flex; align-items: center; flex: none; white-space: nowrap; background: linear-gradient(#fcfcfc, #f2f2f2); padding-right: 4px; border-radius: 2px; }
.bar button { display: flex; align-items: center; gap: 3px; height: 24px; padding: 0 3px; border: 1px solid transparent; flex: none; }
.bar svg { width: 16px; height: 16px; flex: none; }
.bar button:disabled, .xy { color: #858585; }
.bar .on { border-color: #3399ff; background: #e3eef9; }
.bar .drop { width: 13px; padding: 0 3px; }
.drop::after, .combo::after { content: ""; border: 3px solid transparent; border-top-color: #000; border-bottom: 0; }
.bar .drop.tight { width: 8px; padding: 0; }
.drop:disabled::after, .boxed::after { border-top-color: #777; }
.main-bar { min-width: 546px; padding-right: 0; }
.bar .more { margin-left: auto; padding: 0; width: 10px; font: bold 15px/16px "Liberation Sans", sans-serif; align-items: flex-start; }
.view-bar { padding-left: 4px; }
.axis-bar { margin-left: 74px; }
.draw-bar { min-width: 856px; }
.grip { width: 7px; height: 16px; background: radial-gradient(circle, #aaa 1px, transparent 1px) 2px 0 / 4px 4px repeat-y; }
.sep { width: 6px; height: 15px; background: linear-gradient(#b5b5b5, #b5b5b5) 3px 0 / 1px 100% no-repeat; }
.combo { position: relative; width: 68px; height: 24px; margin: 0 2px; background: linear-gradient(90deg, #fff 57px, #f3f3f3 57px); }
.combo.short { width: 57px; background: linear-gradient(90deg, #fff 46px, #f3f3f3 46px); }
.combo.boxed { width: 56px; height: 23px; margin: 0; border: 1px solid #707070; background: #f3f3f3; }
.combo::after { position: absolute; right: 3px; top: 10px; }
.combo select { appearance: none; width: 100%; height: 100%; padding-left: 1px; opacity: 1; }
.xy { display: flex; align-items: center; gap: 3px; margin-right: 4px; font-size: 13px; }
.spin { width: 58px; height: 23px; border: 1px solid #777; display: flex; position: relative; }
.spin input { width: 40px; text-align: right; color: #858585; }
.spin::before, .spin::after { content: ""; position: absolute; right: 4px; top: 4px; border: 3px solid transparent; border-bottom-color: #666; border-top: 0; }
.spin::after { top: 14px; border-top: 3px solid #666; border-bottom: 0; }

.workspace { flex: 1; min-height: 0; display: grid; grid-template-columns: 17px minmax(0, 1fr); }
.side { display: flex; flex-direction: column; gap: 1px; width: 13px; padding-top: 2px; border-right: 1px solid #aaa8b8; }
.side-close { height: 16px; margin-bottom: 1px; background: #0c57dc; display: flex; }
.side-close svg { width: 12px; height: 16px; }
.slot { height: 21px; flex: none; border: solid #8c8c94; border-width: 1px 1px 0 0; width: 12px; background: #f0f0f0; }
.slot.tree { flex: 1; margin-top: 1px; background: #fff; border-bottom-width: 1px; }

.main { display: flex; flex-direction: column; min-width: 0; min-height: 0; }
.view { flex: none; height: 217px; background: #000; position: relative; overflow: hidden; }
.scene { display: block; width: 100%; height: 100%; }
.dims { fill: #dcdcdc; font: 18px "Noto Sans", sans-serif; }
.dims .small { font-size: 13px; font-weight: bold; }
.floor, .notes text { fill: #f00; font: 300 20px "Noto Sans CJK SC", sans-serif; }
.floor { font-weight: 400; }
.panel { position: absolute; left: 3px; top: 3px; width: 180px; height: 181px; display: flex; flex-direction: column; padding: 4px 5px 5px 6px; border: 1px solid #8b9090; border-radius: 4px; background: linear-gradient(#454849, #35383a 35%, #0c0e10 36%, #050505); }
.panel h2 { align-self: flex-start; line-height: 18px; padding: 0 8px 0 0; background: radial-gradient(closest-side, #8a8c8c, transparent); margin-bottom: 3px; }
.checks { flex: 1; background: #fff; border: 3px double #777; padding: 1px 2px; font-size: 12px; }
.checks label { display: flex; align-items: center; gap: 4px; height: 12px; line-height: 12px; white-space: nowrap; }
.checks input { appearance: none; width: 11px; height: 11px; border: 1px solid #8e8f8f; background: #eef1f6; display: flex; margin: 0; }
.checks input:checked::after { content: ""; width: 3px; height: 7px; margin: 0 3px; border: solid #3c5596; border-width: 0 2px 2px 0; transform: rotate(40deg); }

.dock { flex: 1; min-height: 0; display: grid; grid-template-columns: 12px minmax(0, 1fr); }
.dock-grip { background: radial-gradient(circle, #bbb 1px, transparent 1px) 2px 16px / 4px 6px; padding: 4px 1px; background-clip: content-box; }
.dock-grip button { display: block; background: #f0f0f0; }
.dock-grip svg { width: 10px; height: 10px; display: block; }
.dock-body { display: flex; flex-direction: column; min-width: 0; min-height: 0; border-bottom: 1px solid #aaa; }
.dock-bar { height: 30px; padding-top: 2px; }
.dock-bar .sep { width: 4px; }
.total { padding-left: 4px; }
.grid-wrap { flex: 1; min-height: 0; overflow: hidden; border: solid #a0a0a0; border-width: 1px 0 0 1px; padding: 0 0 0 1px; }
table { border-collapse: separate; border-spacing: 0; table-layout: fixed; }
.grid { width: 1135px; line-height: 12px; }
td, th { padding: 0; font-weight: normal; border: solid #c0c0c0; border-width: 0 1px 1px 0; overflow: hidden; }
th { background: linear-gradient(#fff, #f0f0f0); }
th.cur { color: #600060; background: #ffd28c; }
thead th.cur { background: linear-gradient(#f9d99c, #f2bf60); }
.grid thead th { height: 20px; white-space: nowrap; }
.grid td { height: 34px; background: #ccffda; padding-left: 2px; }
.grid tbody th { font: 10px "DejaVu Sans Mono", monospace; padding-right: 8px; }
.grid td:nth-child(2) { border-right-color: #000; }
.grid .c { text-align: center; padding: 0; }
.grid .c svg { width: 12px; height: 12px; display: block; margin: 0 auto; }
.grid .shape { padding: 0; }
.shape svg { display: block; width: 200px; height: 33px; }
.shape path { fill: none; stroke: #000; stroke-width: 2; }
.shape text { font: 10px "DejaVu Sans Mono", monospace; }
.shape .red { fill: #f00; }
.grid .sel { background: #b4eedd; outline: 1px dotted #333; outline-offset: -2px; }
.w21 { width: 21px; } .w33 { width: 33px; } .w36 { width: 36px; } .w38 { width: 38px; } .w39 { width: 39px; } .w49 { width: 49px; } .w56 { width: 56px; } .w61 { width: 61px; } .w72 { width: 72px; } .w73 { width: 73px; } .w121 { width: 121px; } .w156 { width: 156px; } .w166 { width: 166px; } .w201 { width: 201px; }
.hscroll { flex: none; height: 17px; display: flex; background: #ececec; padding: 1px 0; }
.hscroll button { flex: none; width: 20px; display: flex; align-items: center; justify-content: center; }
.hscroll button::after { content: ""; border: 4px solid transparent; border-right-color: #333; border-left: 0; }
.thumb { width: 75%; border: 1px solid #999; border-radius: 2px; background: linear-gradient(#f4f4f4, #dcdcdc 48%, #c8c8ca 52%, #bdbdbf); display: flex; gap: 1px; align-items: center; justify-content: center; }
.thumb i { width: 2px; height: 7px; background: #666; }
.status { flex: none; height: 8px; display: flex; gap: 3px; padding-top: 3px; }
.status span { border: solid #d0d0d0; border-width: 1px 1px 0; width: 97px; background: #f6f6f6; }
.status span:first-child { width: 75px; } .status span:nth-child(3) { width: 48px; } .status span:last-child { flex: 1; }

.props { position: absolute; left: 721px; top: 99px; width: 297px; padding: 0 5px 5px; border: 1px solid #5c6666; background: linear-gradient(90deg, #d4f6f8, #f4fdfd 30%, #cdf5f8); }
.props header { display: flex; align-items: center; justify-content: space-between; height: 26px; padding-left: 2px; }
.props header button { width: 19px; height: 18px; border: 1px solid #6f7777; border-radius: 2px; display: flex; align-items: center; justify-content: center; }
.props header svg { width: 8px; height: 8px; }
.props-body { border: 1px solid #444; padding: 2px 3px 4px; background: #fff; outline: 1px solid #a9b9bb; outline-offset: -2px; }
.props table { width: 276px; line-height: 14px; }
.props thead th { height: 23px; }
.props tbody th { font: 10px "DejaVu Sans Mono", monospace; }
.props td { height: 19px; white-space: nowrap; padding-left: 2px; }
.props td:nth-child(2) { padding-left: 19px; }
.props td:nth-child(3) { color: #808080; }
.props td svg { width: 12px; height: 12px; vertical-align: -3px; color: #000; }
.props .blue td:nth-child(2) { color: #0000e0; }
.props .active td:nth-child(2) { background: #3399ff; color: #fff; }
.props .active td:nth-child(3) { background: #e0f0ff; }
.props .group td:nth-child(2) { padding-left: 3px; color: #808080; }
.props .group button { width: 12px; height: 12px; margin-right: 4px; border: 1px solid #999; background: #eee; color: #000; font: 12px/10px "DejaVu Sans Mono", monospace; }
.props .child td:nth-child(2) { padding-left: 29px; background: linear-gradient(#aaa, #aaa) 8px 0 / 1px 100% no-repeat, linear-gradient(#aaa, #aaa) 9px 9px / 16px 1px no-repeat; }
.props .end td:nth-child(2) { background: linear-gradient(#aaa, #aaa) 8px 0 / 1px 9px no-repeat, linear-gradient(#aaa, #aaa) 8px 9px / 17px 1px no-repeat; }
.notes { position: absolute; left: 0; top: 0; width: 100%; height: 100%; pointer-events: none; }
```
